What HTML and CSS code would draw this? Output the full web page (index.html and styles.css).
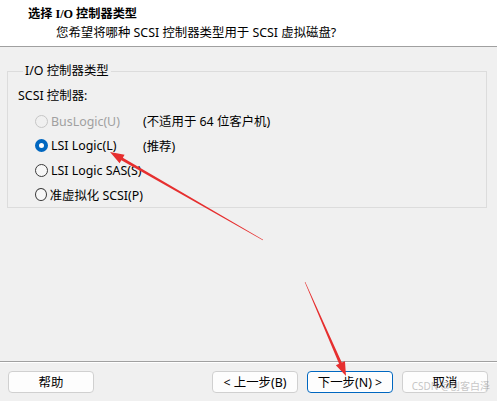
FILE: index.html
```html
<!DOCTYPE html>
<html lang="zh-CN">
<head>
    <meta charset="UTF-8">
    <title>新建虚拟机向导</title>
    <link rel="stylesheet" href="styles.css">
</head>
<body>
    <div class="wizard">
        <div class="head">
            <h1>选择 I/O 控制器类型</h1>
            <p>您希望将哪种 SCSI 控制器类型用于 SCSI 虚拟磁盘?</p>
        </div>
        <div class="content">
            <fieldset class="group">
                <legend>I/O 控制器类型</legend>
                <div class="caption">SCSI 控制器:</div>
                <div class="options">
                    <label class="opt disabled"><input type="radio" name="ctl" disabled> BusLogic(U)</label>
                    <span class="note">(不适用于 64 位客户机)</span>
                    <label class="opt"><input type="radio" name="ctl" checked> LSI Logic(L)</label>
                    <span class="note">(推荐)</span>
                    <label class="opt"><input type="radio" name="ctl"> LSI Logic SAS(S)</label>
                    <span class="note"></span>
                    <label class="opt"><input type="radio" name="ctl"> 准虚拟化 SCSI(P)</label>
                    <span class="note"></span>
                </div>
            </fieldset>
        </div>
        <div class="foot">
            <button>帮助</button>
            <button class="back">&lt; 上一步(B)</button>
            <button class="primary">下一步(N) &gt;</button>
            <button>取消</button>
        </div>
    </div>

    <!-- annotation arrows -->
    <svg class="marks" width="497" height="401" viewBox="0 0 497 401">
        <polygon points="263.15,239.74 122.85,157.7 124.6,154.7 110,152 119.6,163.3 121.35,160.3 262.85,240.26"/>
        <polygon points="305.27,281.88 341.77,362.6 344.98,361.2 346,376 335.82,365.2 339.03,363.8 304.73,282.12"/>
    </svg>
    <div class="watermark">CSDN @创客白泽</div>
</body>
</html>
```

FILE: styles.css
```css
body {
    margin: 0;
    width: 497px;
    height: 401px;
    overflow: hidden;
    background-color: #f0f0f0;
    font-family: "Noto Sans", "Noto Sans CJK SC", sans-serif;
    font-size: 12.4px;
    color: #000000;
}
.wizard {
    height: 401px;
    display: flex;
    flex-direction: column;
}
.head {
    height: 47px;
    background-color: #ffffff;
    border-bottom: 1px solid #a0a0a0;
    box-sizing: border-box;
    padding: 6px 0 0 28px;
}
.head h1 {
    margin: 0;
    font-family: "Liberation Serif", "Noto Sans CJK SC", serif;
    font-size: 12.2px;
    font-weight: bold;
    line-height: 16px;
}
.head p {
    margin: 3px 0 0 28px;
    line-height: 16px;
}
.content {
    flex: 1;
    padding: 16px 10px 0 7px;
}
.group {
    margin: 0;
    height: 145px;
    box-sizing: border-box;
    border: 1px solid #dcdcdc;
    padding: 0 0 0 10px;
}
.group legend {
    margin-left: 5px;
    padding: 0 2px;
    line-height: 16px;
}
.caption {
    margin-top: 9px;
    line-height: 16px;
}
.options {
    display: grid;
    grid-template-columns: 108px auto;
    grid-auto-rows: 24.5px;
    align-items: center;
    margin: 5px 0 0 17px;
}
.opt {
    display: flex;
    align-items: center;
    gap: 3px;
    white-space: nowrap;
}
.opt.disabled {
    color: #a0a0a0;
}
.opt input {
    appearance: none;
    margin: 0;
    width: 13px;
    height: 13px;
    border-radius: 50%;
    border: 1px solid #3a3a3a;
    background-color: #f7f7f7;
    box-sizing: border-box;
}
.opt input:disabled {
    border-color: #c6c6c6;
    background-color: #f0f0f0;
}
.opt input:checked {
    border: 4px solid #0067c0;
    background-color: #ffffff;
}
.note {
    white-space: nowrap;
}
.foot {
    height: 40px;
    border-top: 1px solid #a0a0a0;
    box-shadow: inset 0 1px 0 #ffffff;
    display: flex;
    align-items: flex-start;
    gap: 9px;
    padding: 9px 9px 0 8px;
    box-sizing: border-box;
}
.foot button {
    width: 86px;
    height: 22px;
    padding: 0;
    font-family: inherit;
    font-size: 12.4px;
    color: #000000;
    background-color: #fdfdfd;
    border: 1px solid #d0d0d0;
    border-radius: 4px;
}
.foot .back {
    margin-left: auto;
}
.foot .primary {
    border: 1px solid #0067c0;
    box-shadow: inset 0 0 0 1px #ffffff;
}
.marks {
    position: absolute;
    left: 0;
    top: 0;
}
.marks polygon {
    fill: #e62f2f;
}
.watermark {
    position: absolute;
    right: 7px;
    bottom: 8px;
    color: rgba(140, 140, 140, 0.5);
    font-size: 10px;
}
```
